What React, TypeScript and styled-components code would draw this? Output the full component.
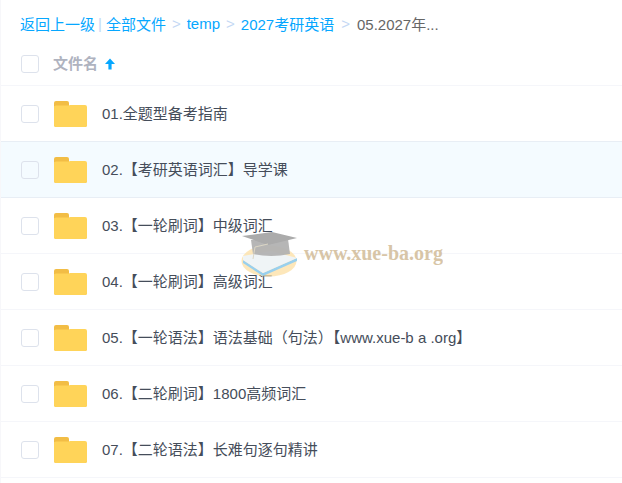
import React from 'react';
import styled, { createGlobalStyle } from 'styled-components';

const files = [
  '01.全题型备考指南',
  '02.【考研英语词汇】导学课',
  '03.【一轮刷词】中级词汇',
  '04.【一轮刷词】高级词汇',
  '05.【一轮语法】语法基础（句法）【www.xue-b a .org】',
  '06.【二轮刷词】1800高频词汇',
  '07.【二轮语法】长难句逐句精讲',
];

const FolderIcon = () => (
  <svg width="33" height="26" viewBox="0 0 33 26">
    <path d="M0 2a2 2 0 0 1 2-2h11a2 2 0 0 1 2 2v3H0z" fill="#f2bd45" />
    <path d="M0 6a2 2 0 0 1 2-2h9.500q2 0 3 2h16.500a2 2 0 0 1 2 2v16a2 2 0 0 1-2 2H2a2 2 0 0 1-2-2z" fill="#f2bd45" />
    <path d="M0 6.500a2 2 0 0 1 2-2h13.500v-0.500h15.500a2 2 0 0 1 2 2v18a2 2 0 0 1-2 2H2a2 2 0 0 1-2-2z" fill="#ffd459" />
  </svg>
);

const App: React.FC = () => (
  <Page>
    <GlobalStyle />
    <Breadcrumb>
      <Link>返回上一级</Link>
      <Divider>|</Divider>
      <Link>全部文件</Link>
      <Chevron>&gt;</Chevron>
      <Link>temp</Link>
      <Chevron>&gt;</Chevron>
      <Link>2027考研英语</Link>
      <Chevron $wide>&gt;</Chevron>
      <Current>05.2027年...</Current>
    </Breadcrumb>
    <HeaderRow>
      <Checkbox />
      <HeaderLabel>文件名</HeaderLabel>
      <svg width="12" height="12" viewBox="0 0 12 12">
        <path d="M6 0.500 L11 6 H7.600 V11.500 H4.400 V6 H1 Z" fill="#06a7ff" />
      </svg>
    </HeaderRow>
    {files.map((name, i) => (
      <Row key={name} $active={i === 1}>
        <Checkbox />
        <FolderIcon />
        <FileName>{name}</FileName>
      </Row>
    ))}
    <Watermark>
      <svg width="57" height="47" viewBox="0 0 57 47">
        <ellipse cx="28" cy="31" rx="27.500" ry="15.500" fill="#fde0a6" opacity="0.85" />
        <path d="M2 30 L22 43 L56 28 L56 31 L22 46 L2 33 Z" fill="#8fcbec" />
        <path d="M2 26 L30 21 L56 28 L22 43 L2 30 Z" fill="#eef3f6" />
        <path d="M10 10 L47 9 L49 24 Q30 28 12 24 Z" fill="#ababab" opacity="0.95" />
        <path d="M1 6 L31 2 L56 8 L27 15 Z" fill="#a2a2a2" />
        <path d="M27 14 L14 17 L12 29" stroke="#d8d2bf" strokeWidth="1" fill="none" />
      </svg>
      <WatermarkText>www.xue-ba.org</WatermarkText>
    </Watermark>
  </Page>
);

export default App;

const GlobalStyle = createGlobalStyle`
  html, body {
    margin: 0;
    padding: 0;
    background: #fff;
    overflow: hidden;
  }
  body {
    font-family: "Liberation Sans", "Noto Sans CJK SC", sans-serif;
  }
`;

const Page = styled.div`
  position: relative;
  width: 622px;
  height: 483px;
  overflow: hidden;
  border-left: 1px solid #f7f7fa;
  box-sizing: border-box;
`;

const Breadcrumb = styled.div`
  display: flex;
  align-items: center;
  height: 42px;
  padding: 5px 0 0 19px;
  box-sizing: border-box;
  font-size: 15px;
  white-space: nowrap;
`;

const Link = styled.span`
  color: #06a7ff;
`;

const Divider = styled.span`
  color: #c4d8f4;
  margin: 0 4px 0 3px;
`;

const Chevron = styled.span<{ $wide?: boolean }>`
  color: #c4d8f4;
  margin: 0 ${(p) => (p.$wide ? 7 : 6)}px;
`;

const Current = styled.span`
  color: #666;
`;

const HeaderRow = styled.div`
  display: flex;
  align-items: center;
  height: 44px;
  padding-left: 20px;
  border-bottom: 1px solid #f5f6fa;
  box-sizing: border-box;
  & > svg {
    margin-left: 6px;
  }
`;

const HeaderLabel = styled.span`
  margin-left: 14px;
  padding-bottom: 2px;
  font-size: 15px;
  font-weight: 700;
  color: #afb3bf;
`;

const Checkbox = styled.span`
  flex: none;
  width: 16px;
  height: 16px;
  border: 1px solid #dde2ec;
  border-radius: 3px;
`;

const Row = styled.div<{ $active: boolean }>`
  display: flex;
  align-items: center;
  height: 56px;
  padding-left: 20px;
  box-sizing: border-box;
  border-bottom: 1px solid ${(p) => (p.$active ? '#e8eef5' : '#f5f6fa')};
  background: ${(p) => (p.$active ? '#f4fbff' : '#fff')};
  box-shadow: ${(p) => (p.$active ? '0 -1px 0 #e8eef5' : 'none')};
  & > svg {
    margin-left: 15px;
    flex: none;
  }
`;

const FileName = styled.span`
  margin-left: 15px;
  padding-bottom: 3px;
  font-size: 15px;
  color: #454d5a;
  white-space: nowrap;
`;

const Watermark = styled.div`
  position: absolute;
  left: 240px;
  top: 230px;
  display: flex;
  align-items: center;
  gap: 6px;
  pointer-events: none;
  opacity: 0.9;
`;

const WatermarkText = styled.span`
  font-family: "Liberation Serif", serif;
  font-weight: 700;
  font-size: 20px;
  color: #d4bf9e;
`;
